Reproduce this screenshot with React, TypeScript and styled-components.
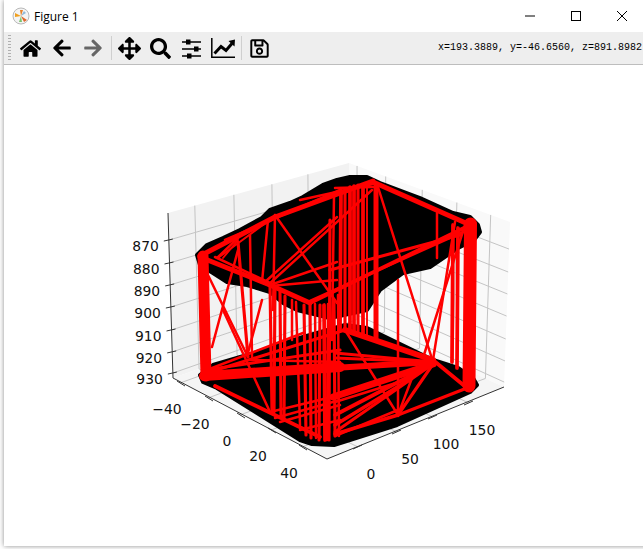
import React from "react";
import styled, { createGlobalStyle } from "styled-components";
import { FaArrowLeft, FaArrowRight, FaArrowsAlt, FaHome, FaRegSave, FaSearch } from "react-icons/fa";

const GlobalStyle = createGlobalStyle`
    html, body {
        margin: 0;
        padding: 0;
        background: #ffffff;
    }
`;

const Desktop = styled.div`
    width: 643px;
    height: 549px;
    overflow: hidden;
    padding-left: 4px;
    box-sizing: border-box;
`;

const Window = styled.div`
    width: 660px;
    height: 546px;
    background: #ffffff;
    box-shadow: 0 0 5px rgba(0, 0, 0, 0.45);
    display: flex;
    flex-direction: column;
`;

const TitleBar = styled.div`
    width: 641px;
    height: 32px;
    display: flex;
    align-items: center;
    flex-shrink: 0;
`;

const AppIcon = styled.svg`
    width: 18px;
    height: 18px;
    margin-left: 8px;
    margin-right: 4px;
`;

const Title = styled.span`
    font-family: "Open Sans", "Noto Sans", sans-serif;
    font-size: 12px;
    color: #000000;
    flex: 1;
`;

const WindowButton = styled.div`
    width: 46px;
    height: 32px;
    display: flex;
    align-items: center;
    justify-content: center;
    svg {
        width: 12px;
        height: 12px;
    }
`;

const Toolbar = styled.div`
    width: 639px;
    height: 33px;
    box-sizing: border-box;
    flex-shrink: 0;
    background: #eeeeee;
    border-bottom: 1px solid #bdbdbd;
    display: flex;
    align-items: center;
`;

const Grip = styled.div`
    width: 3px;
    height: 27px;
    margin: 0 4px 0 4px;
    background-image: repeating-linear-gradient(to bottom, #b0b0b0 0 1px, transparent 1px 3px);
`;

const ToolButton = styled.div<{ $muted?: boolean; $size: number }>`
    width: 31px;
    height: 32px;
    flex-shrink: 0;
    display: flex;
    align-items: center;
    justify-content: center;
    color: ${(p) => (p.$muted ? "#666666" : "#000000")};
    svg {
        width: ${(p) => p.$size}px;
        height: ${(p) => p.$size}px;
    }
`;

const Separator = styled.div`
    width: 1px;
    height: 24px;
    margin: 0 2px 0 3px;
    flex-shrink: 0;
    background: #cfcfcf;
`;

const Coords = styled.div`
    margin-left: auto;
    margin-right: 1px;
    font-family: "Liberation Mono", monospace;
    font-size: 10px;
    line-height: 12px;
    color: #000000;
    white-space: pre;
`;

const Canvas = styled.svg`
    display: block;
    width: 639px;
    height: 481px;
`;

const TickLabel = styled.text`
    font-family: "DejaVu Sans", sans-serif;
    font-size: 13.9px;
    fill: #111111;
`;

type Pt = [number, number];
type Seg = [number, number, number, number, number?];

const lerp = (a: Pt, b: Pt, t: number): Pt => [a[0] + (b[0] - a[0]) * t, a[1] + (b[1] - a[1]) * t];

// pane corners, in picture coordinates
const topLeft: Pt = [168, 213];
const topBack: Pt = [349, 163];
const topRight: Pt = [510, 222];
const botLeft: Pt = [173, 378];
const botBack: Pt = [349, 316];
const botRight: Pt = [504, 387];
const front: Pt = [327, 459];

const poly = (pts: Pt[]) => pts.map((p) => p.join(",")).join(" ");

const zTicks = [0.164, 0.303, 0.436, 0.57, 0.709, 0.842, 0.97];
const zLabels = ["870", "880", "890", "900", "910", "920", "930"];
const xTicks = [0.148, 0.364, 0.574, 0.773]; // 0..150
const xLabels = ["0", "50", "100", "150"];
const yTicks = [0.05, 0.228, 0.455, 0.67, 0.88]; // -40..40, on the back wall
const yLabels = ["\u221240", "\u221220", "0", "20", "40"];
const yFront: Pt[] = [[180, 383], [208, 398], [240, 415], [271, 430], [302, 447]];
const xFront: Pt[] = [[358, 447], [397, 432], [433, 417], [469, 403]];

const topBlob: Pt[] = [
    [197, 255], [207, 245], [223, 238], [240, 230], [262, 218], [270, 210], [290, 203], [303, 197],
    [323, 185], [337, 180], [350, 177], [367, 177], [380, 183], [420, 198], [453, 213], [470, 217],
    [478, 225], [480, 232], [474, 240], [458, 248], [430, 267], [403, 273], [380, 290], [367, 310],
    [330, 318], [297, 310], [283, 303], [270, 292], [247, 285], [227, 282], [213, 273], [200, 265],
];

const bottomBlob: Pt[] = [
    [200, 375], [203, 382], [217, 388], [300, 440], [312, 444], [334, 445], [397, 425], [470, 392],
    [477, 385], [473, 378], [458, 368], [433, 360], [367, 328], [345, 325], [303, 337], [257, 352],
    [213, 365],
];

const redLines: Seg[] = [
    // top outline
    [200, 256, 275, 217, 4], [275, 217, 373, 181, 4], [225, 240, 340, 190, 2], [300, 200, 373, 184, 2],
    [340, 194, 372, 182, 2], [335, 188, 373, 187, 2], [373, 182, 468, 224, 4], [200, 257, 270, 285, 4],
    [215, 257, 270, 283, 2], [270, 285, 310, 303, 4], [310, 303, 468, 226, 3], [310, 301, 463, 232, 2],
    [330, 270, 460, 235, 2.5], [270, 285, 337, 262, 2], [270, 286, 337, 280, 2], [265, 282, 337, 217, 2],
    [268, 285, 372, 190, 2], [275, 215, 337, 303, 2], [217, 258, 238, 238, 2], [218, 258, 275, 216, 1.5],
    [378, 187, 433, 362, 2], [437, 213, 437, 258, 2], [455, 222, 433, 360, 2], [465, 225, 423, 358, 2],
    // top face, inner verticals and diagonals
    [268, 220, 262, 282, 2], [275, 215, 273, 310, 2], [207, 273, 248, 357, 2], [238, 250, 212, 347, 2],
    [238, 242, 248, 357, 2.5], [250, 235, 252, 357, 2], [262, 300, 248, 353, 2], [223, 258, 238, 240, 1.5],
    [398, 280, 398, 416, 2], [453, 225, 452, 362, 3], [458, 228, 457, 368, 3],
    // the four walls of thick lines
    [203, 256, 206, 376, 11], [470.5, 224, 469, 386, 13],
    [341, 190, 340, 330, 3], [345, 190, 345, 328, 2.5], [350, 187, 350, 330, 3], [354, 186, 354, 332, 3],
    [358, 185, 358, 332, 2.5], [363, 185, 363, 335, 3], [367, 185, 367, 335, 1.5], [376, 184, 376, 338, 4],
    [334, 196, 332, 340, 2], [330, 220, 329, 440, 2.5],
    [304, 305, 306, 435, 2.5], [310, 303, 311, 438, 2.5], [315, 304, 316, 438, 2], [320, 305, 319, 440, 2.5],
    [324, 305, 325, 440, 3], [328, 304, 327, 440, 2], [334, 300, 335, 436, 2.5], [338, 295, 339, 436, 2],
    [270, 285, 272, 412, 2.5], [275, 288, 274, 412, 2.5], [280, 292, 281, 415, 2.5], [285, 296, 284, 418, 2.5],
    [292, 300, 292, 340, 2], [296, 302, 300, 425, 2],
    // bottom face
    [204, 376, 340, 367, 10], [210, 372, 345, 330, 2.5], [212, 368, 303, 333, 2], [212, 369, 340, 350, 2.5],
    [250, 360, 340, 362, 2], [215, 386, 320, 437, 3], [223, 310, 270, 412, 2],
    [270, 412, 340, 395, 2], [275, 418, 340, 400, 2], [280, 422, 340, 405, 2], [300, 430, 340, 420, 2],
    [345, 330, 433, 360, 6], [433, 360, 467, 388, 3], [345, 330, 398, 415, 2], [335, 434, 398, 415, 3],
    [398, 415, 467, 388, 2.5], [335, 353, 433, 362, 2.5], [335, 358, 433, 362, 2.5], [333, 368, 433, 362, 6],
    [333, 397, 433, 364, 7], [335, 402, 412, 378, 2], [335, 415, 433, 364, 3], [335, 425, 412, 378, 3],
    [335, 432, 433, 364, 2.5], [398, 415, 412, 378, 2], [398, 415, 433, 364, 2.5], [335, 436, 398, 410, 2],
];

function AxesPanes() {
    return (
        <>
            <polygon points={poly([topLeft, topBack, botBack, botLeft])} fill="#f2f2f2" />
            <polygon points={poly([topBack, topRight, botRight, botBack])} fill="#f9f9f9" />
            <polygon points={poly([botLeft, botBack, botRight, front])} fill="#f5f5f5" />
            <g stroke="#c4c4c4" strokeWidth="1" fill="none">
                {zTicks.map((t) => {
                    const a = lerp(topLeft, botLeft, t);
                    const b = lerp(topBack, botBack, t);
                    const c = lerp(topRight, botRight, t);
                    return <polyline key={t} points={poly([a, b, c])} />;
                })}
                {xTicks.map((t, i) => {
                    const a = lerp(topLeft, topBack, t);
                    const b = lerp(botLeft, botBack, t);
                    return <polyline key={t} points={poly([a, b, xFront[i]])} />;
                })}
                {yTicks.map((t, i) => {
                    const a = lerp(topBack, topRight, t);
                    const b = lerp(botBack, botRight, t);
                    return <polyline key={t} points={poly([a, b, yFront[i]])} />;
                })}
            </g>
        </>
    );
}

function AxesLines() {
    return (
        <g stroke="#333333" strokeWidth="1" fill="none">
            <polyline points={poly([topLeft, botLeft, front, botRight])} />
            {zTicks.map((t) => {
                const a = lerp(topLeft, botLeft, t);
                return <line key={t} x1={a[0] - 5} y1={a[1] + 1} x2={a[0] + 4} y2={a[1] - 1} />;
            })}
            {yFront.map((p) => (
                <line key={p[0]} x1={p[0] - 3} y1={p[1] - 2} x2={p[0] + 5} y2={p[1] + 3} />
            ))}
            {xFront.map((p) => (
                <line key={p[0]} x1={p[0] - 5} y1={p[1] + 2} x2={p[0] + 4} y2={p[1] - 2} />
            ))}
        </g>
    );
}

function Plot() {
    return (
        <Canvas viewBox="4 65 639 481">
            <AxesPanes />
            <polygon points={poly(topBlob)} fill="#000" stroke="#000" strokeWidth="4" strokeLinejoin="round" />
            <polygon points={poly(bottomBlob)} fill="#000" stroke="#000" strokeWidth="4" strokeLinejoin="round" />
            <g stroke="#ff0000" fill="none" strokeLinecap="round">
                {redLines.map(([x1, y1, x2, y2, w = 2], i) => (
                    <line key={i} x1={x1} y1={y1} x2={x2} y2={y2} strokeWidth={w < 5 ? w * 1.25 : w} />
                ))}
            </g>
            <AxesLines />
            {zTicks.map((t, i) => {
                const a = lerp(topLeft, botLeft, t);
                return (
                    <TickLabel key={t} x={a[0] - 10} y={a[1] + 11} textAnchor="end">
                        {zLabels[i]}
                    </TickLabel>
                );
            })}
            {yFront.map((p, i) => (
                <TickLabel key={p[0]} x={p[0] - 13} y={p[1] + 31} textAnchor="middle">
                    {yLabels[i]}
                </TickLabel>
            ))}
            {xFront.map((p, i) => (
                <TickLabel key={p[0]} x={p[0] + 13} y={p[1] + 32} textAnchor="middle">
                    {xLabels[i]}
                </TickLabel>
            ))}
        </Canvas>
    );
}

export default function App() {
    return (
        <Desktop>
            <GlobalStyle />
            <Window>
                <TitleBar>
                    <AppIcon viewBox="0 0 18 18">
                        <circle cx="9" cy="9" r="8" fill="#f4f4f4" stroke="#b9b9b9" />
                        <path d="M9 9 L3 6 L3 10 Z" fill="#f0a020" />
                        <path d="M9 9 L11 3 L8 3 Z" fill="#e8832a" />
                        <path d="M9 9 L15 13 L12 15 Z" fill="#e0692e" />
                        <path d="M9 9 L7 15 L10 15 Z" fill="#7cc470" />
                        <path d="M9 9 L14 6 L12 4 Z" fill="#8fb8d8" />
                    </AppIcon>
                    <Title>Figure 1</Title>
                    <WindowButton>
                        <svg viewBox="0 0 12 12">
                            <line x1="1" y1="6" x2="11" y2="6" stroke="#000" />
                        </svg>
                    </WindowButton>
                    <WindowButton>
                        <svg viewBox="0 0 12 12">
                            <rect x="1.5" y="1.5" width="9" height="9" fill="none" stroke="#000" />
                        </svg>
                    </WindowButton>
                    <WindowButton>
                        <svg viewBox="0 0 12 12">
                            <path d="M1 1 L11 11 M11 1 L1 11" stroke="#000" fill="none" />
                        </svg>
                    </WindowButton>
                </TitleBar>
                <Toolbar>
                    <Grip />
                    <ToolButton $size={21}>
                        <FaHome />
                    </ToolButton>
                    <ToolButton $size={20}>
                        <FaArrowLeft />
                    </ToolButton>
                    <ToolButton $muted $size={20}>
                        <FaArrowRight />
                    </ToolButton>
                    <Separator />
                    <ToolButton $size={23}>
                        <FaArrowsAlt />
                    </ToolButton>
                    <ToolButton $size={21}>
                        <FaSearch />
                    </ToolButton>
                    <ToolButton $size={21}>
                        <svg viewBox="0 0 21 21">
                            <path d="M1 4 H20 M1 11 H20 M1 18 H20" stroke="#000" strokeWidth="1.4" />
                            <rect x="5" y="1.5" width="4.5" height="5" fill="#000" />
                            <rect x="13" y="8.5" width="4.5" height="5" fill="#000" />
                            <rect x="6" y="15.5" width="4.5" height="5" fill="#000" />
                        </svg>
                    </ToolButton>
                    <ToolButton $size={24}>
                        <svg viewBox="0 0 24 24">
                            <path d="M0.8 2 V21.2 H24" stroke="#000" strokeWidth="1.5" fill="none" />
                            <path d="M3.5 17.5 L10 10.5 L15 14.5 L21 7.5" stroke="#000" strokeWidth="3" fill="none" />
                            <path d="M17.5 5 L24 3.5 L23.5 10.5 Z" fill="#000" />
                        </svg>
                    </ToolButton>
                    <Separator />
                    <ToolButton $size={21}>
                        <FaRegSave />
                    </ToolButton>
                    <Coords>x=193.3889, y=-46.6560, z=891.8982</Coords>
                </Toolbar>
                <Plot />
            </Window>
        </Desktop>
    );
}
